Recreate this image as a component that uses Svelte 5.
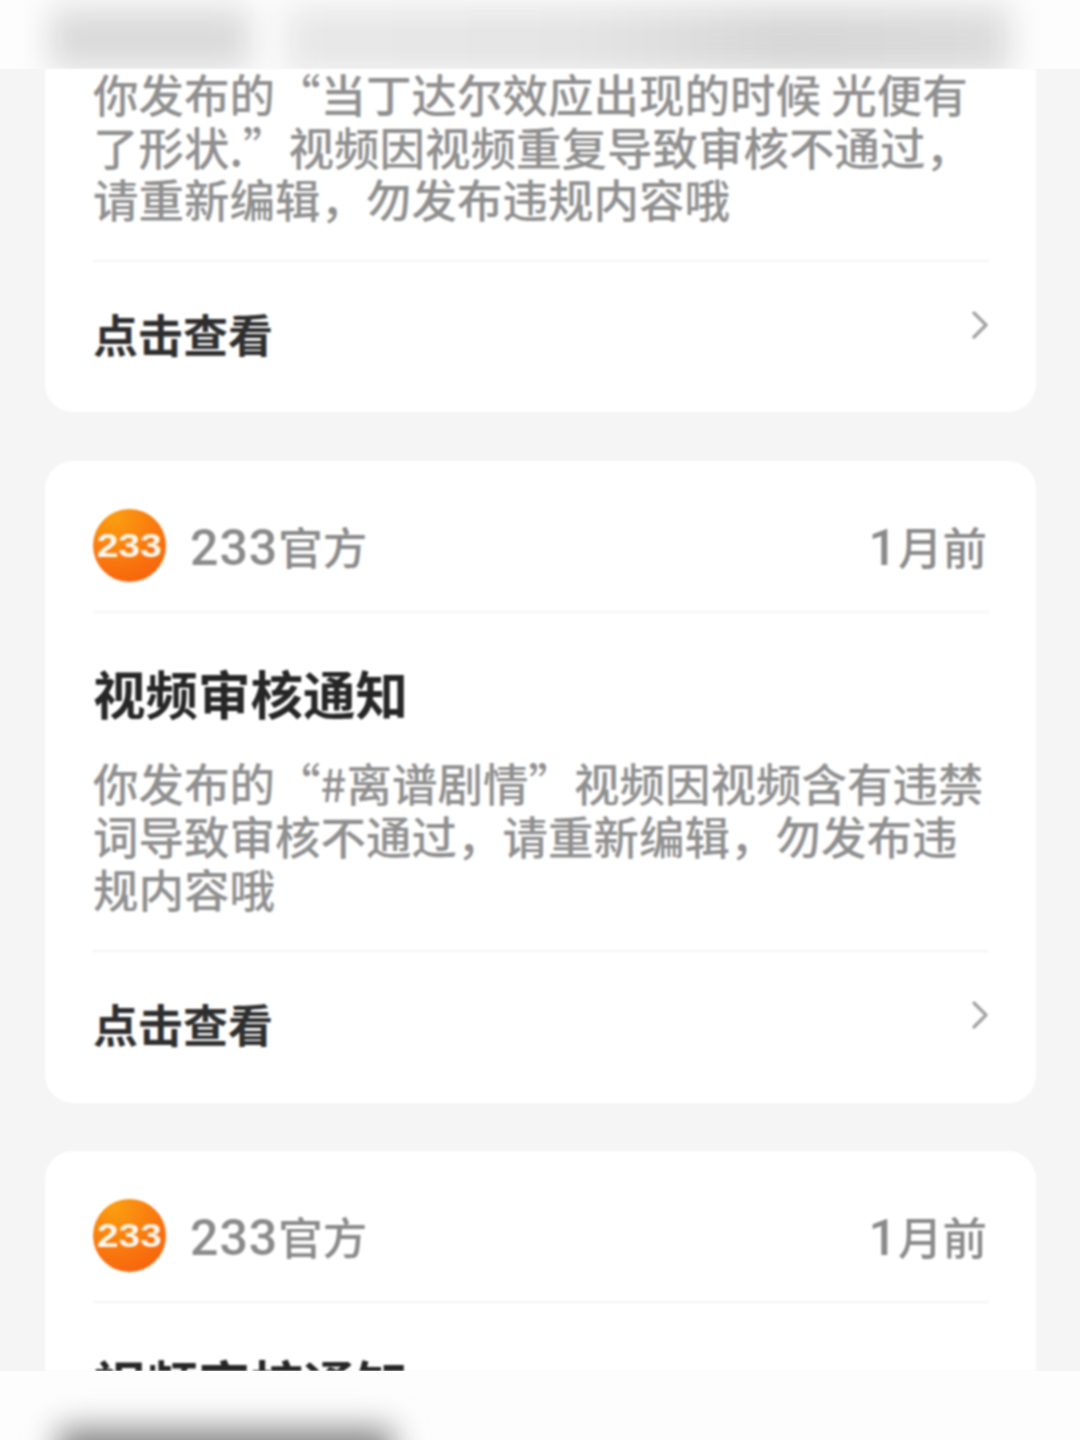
<script lang="ts">
  const notices = [
    {
      lines: ["你发布的“#离谱剧情”视频因视频含有违禁", "词导致审核不通过，请重新编辑，勿发布违", "规内容哦"]
    }
  ];
  const firstLines = ["你发布的“当丁达尔效应出现的时候 光便有", "了形状.”视频因视频重复导致审核不通过，", "请重新编辑，勿发布违规内容哦"];
</script>

{#snippet header()}
  <div class="head">
    <div class="logo"><span>233</span></div>
    <span class="name"><span class="num">233</span>官方</span>
    <span class="time"><span class="num">1</span>月前</span>
  </div>
{/snippet}

{#snippet link()}
  <div class="link">
    <span>点击查看</span>
    <svg width="18" height="30" viewBox="0 0 18 30" fill="none">
      <path d="M3 3 L15 15 L3 27" stroke="#a3a3a3" stroke-width="3.4" stroke-linecap="round" stroke-linejoin="round" />
    </svg>
  </div>
{/snippet}

<div class="page">
  <div class="bar top">
    <div class="smear s1"></div>
    <div class="smear s2"></div>
  </div>

  <div class="list">
    <section class="card first">
      <div class="text">
        {#each firstLines as line}
          <div>{line}</div>
        {/each}
      </div>
      {@render link()}
    </section>

    {#each notices as notice}
      <section class="card">
        {@render header()}
        <h2>视频审核通知</h2>
        <div class="text">
          {#each notice.lines as line}
            <div>{line}</div>
          {/each}
        </div>
        {@render link()}
      </section>
    {/each}

    <section class="card">
      {@render header()}
      <h2>视频审核通知</h2>
    </section>
  </div>

  <div class="bar bottom">
    <div class="smear s3"></div>
  </div>
</div>

<style>
  :global(body) {
    margin: 0;
    background: #f5f5f5;
  }

  .page {
    width: 1080px;
    height: 1440px;
    display: flex;
    flex-direction: column;
    overflow: hidden;
    font-family: "Noto Sans CJK SC", "Liberation Sans", sans-serif;
  }

  .bar {
    position: relative;
    flex: none;
    height: 69px;
    background: #fdfdfd;
    overflow: hidden;
  }

  .smear {
    position: absolute;
    filter: blur(16px);
  }

  .s1 {
    left: 50px;
    top: 8px;
    width: 200px;
    height: 62px;
    background: #dadada;
  }

  .s2 {
    left: 285px;
    top: 6px;
    width: 725px;
    height: 70px;
    background: linear-gradient(90deg, #e8e8e8, #e4e4e4 40%, #d6d6d6 70%, #dcdcdc);
  }

  .s3 {
    left: 58px;
    top: 58px;
    width: 335px;
    height: 50px;
    background: #808080;
  }

  .list {
    flex: 1;
    min-height: 0;
    overflow: hidden;
    display: flex;
    flex-direction: column;
    gap: 48px;
    filter: blur(0.9px);
  }

  .card {
    flex: none;
    box-sizing: border-box;
    width: 991px;
    margin-left: 45px;
    padding: 0 47px 1px 48px;
    background: #fff;
    border-radius: 28px;
  }

  .card.first {
    margin-top: -28px;
    margin-bottom: 1px;
    padding: 1px 47px 0 48px;
    border-radius: 0 0 28px 28px;
  }

  .first .text {
    padding-top: 25px;
    padding-bottom: 35px;
    line-height: 52.7px;
  }

  .head {
    display: flex;
    align-items: center;
    box-sizing: border-box;
    height: 152px;
    padding-top: 18px;
    border-bottom: 2px solid #f4f4f4;
  }

  .logo {
    width: 73px;
    height: 73px;
    border-radius: 50%;
    background: radial-gradient(circle at 30% 12%, #fb9d10, #f9760f 55%, #f55a0c);
    display: flex;
    align-items: center;
    justify-content: center;
    margin-right: 24px;
    flex: none;
  }

  .logo span {
    color: #fff6ec;
    font: 700 34px/1 "Liberation Sans", sans-serif;
    transform: scaleX(1.14);
  }

  .name,
  .time {
    font-size: 44.5px;
    font-weight: 500;
    line-height: 73px;
    color: #8a8a8a;
  }

  .num {
    font: 500 50px/1 Roboto, "Liberation Sans", sans-serif;
    letter-spacing: 1px;
  }

  .time {
    margin-left: auto;
    margin-right: 2px;
  }

  h2 {
    margin: 0;
    padding-top: 47px;
    font-size: 52.5px;
    line-height: 64px;
    font-weight: 700;
    color: #262626;
  }

  .text {
    font-size: 45.5px;
    font-weight: 500;
    line-height: 53px;
    color: #8f8f8f;
    white-space: nowrap;
    padding-top: 32px;
    padding-bottom: 35px;
    border-bottom: 2px solid #f4f4f4;
  }

  .link {
    display: flex;
    align-items: flex-start;
    justify-content: space-between;
    height: 150px;
    box-sizing: border-box;
    padding-top: 42px;
    font-size: 45px;
    line-height: 60px;
    font-weight: 700;
    color: #2e2e2e;
  }

  .link svg {
    margin-top: 6px;
  }
</style>
